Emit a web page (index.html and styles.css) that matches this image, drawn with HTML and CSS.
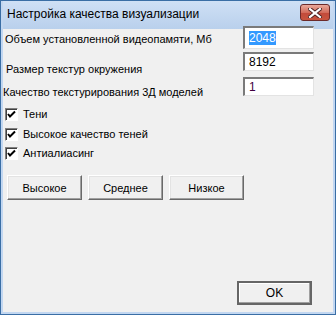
FILE: index.html
```html
<!doctype html>
<html lang="ru">
<head>
  <meta charset="utf-8">
  <title>Настройка качества визуализации</title>
  <link rel="stylesheet" href="styles.css">
</head>
<body>

<div class="window">
  <div class="titlebar">
    <span class="title">Настройка качества визуализации</span>
    <span class="close">
      <svg width="14" height="10" viewBox="0 0 14 10">
        <path d="M2 1 L12 9 M12 1 L2 9" stroke="#4a2020" stroke-width="4" stroke-linecap="square"/>
        <path d="M2 1 L12 9 M12 1 L2 9" stroke="#fff" stroke-width="2.2" stroke-linecap="square"/>
      </svg>
    </span>
  </div>

  <div class="client">
    <div class="field row1">
      <span class="label">Объем установленной видеопамяти, Мб</span>
      <div class="edit tall"><span class="sel">2048</span></div>
    </div>
    <div class="field row2">
      <span class="label">Размер текстур окружения</span>
      <div class="edit">8192</div>
    </div>
    <div class="field row3">
      <span class="label">Качество текстурирования 3Д моделей</span>
      <div class="edit purple">1</div>
    </div>

    <div class="checks">
      <label class="check"><span class="box"><svg width="9" height="9" viewBox="0 0 9 9"><path d="M1 4 L3 6.5 L8 1.5" fill="none" stroke="#000" stroke-width="2"/></svg></span>Тени</label>
      <label class="check"><span class="box"><svg width="9" height="9" viewBox="0 0 9 9"><path d="M1 4 L3 6.5 L8 1.5" fill="none" stroke="#000" stroke-width="2"/></svg></span>Высокое качество теней</label>
      <label class="check"><span class="box"><svg width="9" height="9" viewBox="0 0 9 9"><path d="M1 4 L3 6.5 L8 1.5" fill="none" stroke="#000" stroke-width="2"/></svg></span>Антиалиасинг</label>
    </div>

    <div class="presets">
      <button class="btn">Высокое</button>
      <button class="btn">Среднее</button>
      <button class="btn">Низкое</button>
    </div>

    <div class="footer">
      <button class="btn ok">OK</button>
    </div>
  </div>
</div>

</body>
</html>
```
FILE: styles.css
```css
body {
  margin: 0;
  padding: 0;
  font-family: "Liberation Sans", Arial, sans-serif;
  font-size: 11px;
  color: #000;
}

.window {
  width: 336px;
  height: 315px;
  box-sizing: border-box;
  border: 1px solid #3a6ea5;
  padding: 0 2px 2px 2px;
  background: #c2d7f1;
  display: flex;
  flex-direction: column;
}

.titlebar {
  height: 28px;
  display: flex;
  align-items: center;
  justify-content: space-between;
  background: linear-gradient(#cfe0f5, #b9d0ec);
}

.title {
  font-size: 12px;
  padding-left: 4px;
  padding-bottom: 3px;
}

.close {
  width: 28px;
  height: 15px;
  margin-right: 3px;
  margin-bottom: 5px;
  border: 1px solid #6b2a2a;
  border-radius: 3px;
  background: linear-gradient(#e9a99b, #d36c5b 50%, #c24a3a 51%, #c8553f);
  display: flex;
  align-items: center;
  justify-content: center;
}

.client {
  flex: 1;
  background: #f0f0f0;
  display: flex;
  flex-direction: column;
  padding: 0 19px 0 2px;
}

/* подписи смещены относительно полей, как в оригинальном диалоге */
.field {
  display: flex;
  align-items: flex-end;
  justify-content: space-between;
  line-height: 14px;
}

.row1 { margin-top: -3px; }
.row1 .label { margin-bottom: 3px; }
.row2 { margin-top: 3px; }
.row2 .label { margin-bottom: -5px; margin-left: 1px; }
.row3 { margin-top: 6px; }
.row3 .label { margin-bottom: -3px; margin-left: -2px; }

.edit {
  width: 71px;
  height: 19px;
  box-sizing: border-box;
  background: #fff;
  border-style: solid;
  border-width: 2px 1px 1px 2px;
  border-color: #7a7a7a #e3e3e3 #e3e3e3 #7a7a7a;
  padding: 1px 0 0 4px;
  font-size: 12px;
  line-height: 15px;
}

.edit.tall {
  height: 23px;
  padding-top: 3px;
}

.edit.purple { color: #400040; }

.sel {
  background: #3399ff;
  color: #fff;
}

.checks {
  display: flex;
  flex-direction: column;
  margin-top: 11px;
}

.check {
  display: flex;
  align-items: center;
  height: 14px;
}

.check + .check { margin-top: 6px; }
.check + .check + .check { margin-top: 5px; }

.box {
  width: 13px;
  height: 13px;
  box-sizing: border-box;
  background: #fff;
  border-style: solid;
  border-width: 1px;
  border-color: #808080 #fff #fff #808080;
  box-shadow: inset 1px 1px #404040;
  display: flex;
  align-items: center;
  justify-content: center;
  margin-right: 5px;
}

.presets {
  display: flex;
  gap: 6px;
  margin-top: 15px;
  padding-left: 2px;
}

.btn {
  width: 75px;
  height: 25px;
  font-family: "Liberation Sans", Arial, sans-serif;
  font-size: 11px;
  color: #000;
  background: #f0f0f0;
  border-style: solid;
  border-width: 1px;
  border-color: #fff #696969 #696969 #fff;
  box-shadow: inset -1px -1px #a0a0a0, inset 1px 1px #e3e3e3;
  padding: 0;
}

.footer {
  margin-top: auto;
  display: flex;
  justify-content: flex-end;
  padding-bottom: 7px;
  margin-right: 2px;
}

.btn.ok {
  width: 75px;
  height: 24px;
  font-size: 12px;
  border: 2px solid #666;
  box-shadow: inset -1px -1px #a0a0a0, inset 1px 1px #fff;
}
```
